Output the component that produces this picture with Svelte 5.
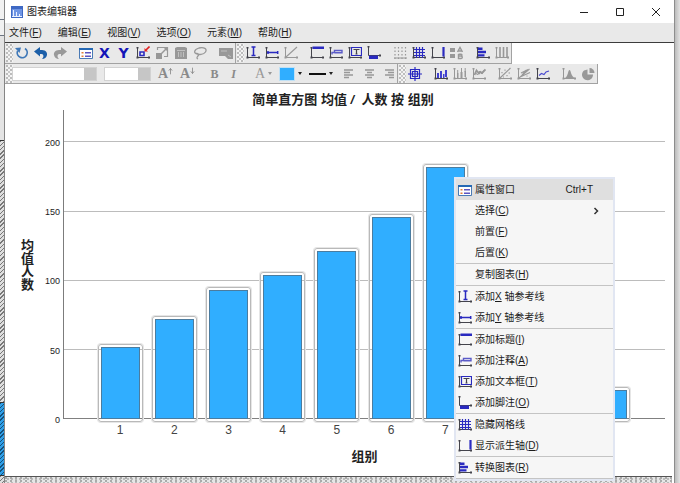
<script>
  const DARK = '#44444c';
  const BLUE = '#2a2ac0';
  const GRAY = '#989898';

  // Shapes on a 14x14 grid: [path, paint, 'f' for fill or stroke width]
  const axes = (c) => [
    ['M1.5 1V11.5H13', c, 1],
    ['M.5 1h2v1.500h-2zM.5 10.500h2v2h-2zM12 10.500h2v2h-2z', c, 'f']
  ];

  const icons = {
    rotate: [
      ['M10 2.500A5 5 0 1 1 2.500 5', '#3f78b8', 1.7],
      ['M0 2L6 1.500L4.500 7z', '#3f78b8', 'f']
    ],
    undo: [['M0 5.500L6 1V4H8C12 4 13.500 7 13 9C12.500 11.500 10.500 13 8 13C10 11.500 10 8 7.500 8H6V10.500z', '#1c5fa8', 'f']],
    redo: [['M14 5.500L8 1V4H6C2 4 .5 7 1 9C1.500 11.500 3.500 13 6 13C4 11.500 4 8 6.500 8H8V10.500z', '#999', 'f']],
    props: [
      ['M1 2h12v11H1z', '#fff', 'f'],
      ['M.5 2.500h13v10H.5z', '#4a7ab5', 1],
      ['M0 2h14v2H0z', '#2468b4', 'f'],
      ['M2.500 6h2v1.500h-2zM2.500 9.500h2V11h-2z', '#e0803a', 'f'],
      ['M6 6.800H12M6 10.200H12', '#5c55c0', 1.4]
    ],
    scale: [
      ...axes(DARK),
      ['M4 6h4v3.500H4z', BLUE, 1.6],
      ['M13.500 .5L10 4', '#e02020', 1.6],
      ['M8.500 2V5.500H12z', '#e02020', 'f']
    ],
    rescale: [
      ['M2.500 4V1.500h10v9H9', GRAY, 1.2],
      ['M1 7h6v6H1zM13 1V6L8 1z', GRAY, 'f'],
      ['M5 9L11 3', GRAY, 1.4]
    ],
    bins: [
      ['M1 2L3 1h8l2 1v11H1z', GRAY, 'f'],
      ['M4.500 11V6M7 11V6M9.500 11V6M3 4.500h8', '#c0c0c0', 1]
    ],
    lasso: [['M4.500 8C0 7.500 1 3.500 6 2C11 .8 14.500 3 12.500 6C10.500 9 5.500 9 4 7.500C6.500 8 5.500 9.500 4.500 10.500C3.500 12 4 12.500 5 13', GRAY, 1.3]],
    picture: [
      ['M0 2h14v11H9L6 10H0z', GRAY, 'f'],
      ['M2 5h6M9 9l3 2', '#c0c0c0', 1]
    ],
    xref: [...axes(DARK), ['M7.500 1V9.500M5.500 1h4M5.500 9.500h4', BLUE, 1.5]],
    yref: [...axes(DARK), ['M2 6.500H13M3 5v3M12.700 5v3', BLUE, 1.5]],
    eqref: [...axes(GRAY), ['M2 11L13 1', GRAY, 1.1]],
    title: [...axes(DARK), ['M2.500 .5H14v2.500H2.500z', BLUE, 'f']],
    note: [...axes(DARK), ['M3 8.500V6.500H5.500V4.500H13V6.800H5.500', '#5b5bc8', 1.4]],
    textbox: [...axes(DARK), ['M3.500 1.500h10v8h-10z', BLUE, 1.2], ['M5.500 3.500h6M8.500 3.500V8M7.500 8h2', DARK, 1.2]],
    footnote: [['M1.500 0V9.500H13', DARK, 1], ['M.5 0h2v1.500h-2zM12 8.500h2v2h-2z', DARK, 'f'], ['M2 9.500h9V13H2z', BLUE, 'f']],
    dots: [['M2 1V13M5.500 1V13M9 1V13M12.500 1V13', GRAY, 1.2, '1.500 2'], ['M1 12H14', GRAY, 1]],
    grid: [...axes(DARK), ['M4.500 1V12M7.500 1V12M10.500 1V12M2 3.500H13M2 6.500H13M2 9.500H13', BLUE, 1.2]],
    derived: [...axes(DARK), ['M12.500 1V10.500', BLUE, 2.200]],
    labels: [
      ['M0 2h5v4H0zM0 8h5v4H0z', GRAY, 'f'],
      ['M7.500 6L10 1.500L12.500 6M8.500 5H12', GRAY, 1.4],
      ['M8.500 8V12.500H11C13 12 12.500 10 11 10H8.500M8.500 8.200H11C12.500 8.500 12 10 11 10', GRAY, 1.4]
    ],
    transpose: [...axes(DARK), ['M2 1.500h4.500v2.500H2zM2 4.800h8v2.500H2zM2 8.200h6.500v2.300H2z', BLUE, 'f']],
    columns: [...axes(GRAY), ['M5 1V11M8.500 1V11M12 1V11', GRAY, 1.6]],
    left: [['M1 3H10M1 5.500H7M1 8H10M1 10.500H6', GRAY, 1.4]],
    center: [['M3 3H12M5 5.500H10M3 8H12M5 10.500H10', GRAY, 1.4]],
    right: [['M4 3H13M7 5.500H13M4 8H13M8 10.500H13', GRAY, 1.4]],
    frame: [['M2.500 2.500h9v9h-9zM4.500 4.500h5v5h-5zM7 0V14M0 7H14', BLUE, 1.2]],
    hist: [...axes(DARK), ['M3 6h2v5H3zM6 4h2v7H6zM9 7h1.500v4H9zM11 3h2v7h-2z', '#4040d0', 'f']],
    errbars: [...axes(GRAY), ['M4 6h1.500v5H4zM7.500 5h2v6h-2zM11.500 4H13v6h-1.500z', GRAY, 'f'], ['M4.700 3V6M8.500 1V5M12.200 1V5', GRAY, 1]],
    area: [...axes(GRAY), ['M2.500 8L4.500 3.500L7 6.500L8.500 5L10 6L13.500 2.500', GRAY, 1.8], ['M3 5L5.500 8L7.500 4L10 7L12 3', GRAY, 1]],
    fit: [...axes(GRAY), ['M2 11L12.500 1M4 5v1.200M9 8v1.200M7 2.500v1.200M10.500 6h1.500M5 10h1', GRAY, 1.1]],
    fitgroups: [...axes(GRAY), ['M2 11L12.500 2M2 10.500L13 5.500M4 6L11 2.500M5 8L9 3M10 8.500v1', GRAY, 1.1]],
    interp: [...axes(DARK), ['M3 8.500L5.500 6.500L8 7.500L10 5L13 4', '#4a4ad0', 1.2]],
    normal: [...axes(GRAY), ['M3 11C6 10 6 3 7.500 3S9 10 13 11z', GRAY, 'f']],
    pie: [['M6.500 2.500V7.500H12A5.500 5.500 0 1 1 3 3.500z', GRAY, 'f'], ['M8.500 1A5 5 0 0 1 13.500 6H8.500z', GRAY, 'f']]
  };

  const mainTools = [
    [['rotate', '旋转'], ['undo', '撤销'], ['redo', '重做']],
    [['props', '属性'], ['X', 'X'], ['Y', 'Y'], ['scale', '缩放'], ['rescale', '重新缩放'], ['bins', '分箱'], ['lasso', '套索']],
    [['picture', '图片']]
  ];
  const elementTools = [
    [['xref', 'X 轴参考线'], ['yref', 'Y 轴参考线'], ['eqref', '方程参考线']],
    [['title', '标题'], ['note', '注释'], ['textbox', '文本框'], ['footnote', '脚注']],
    [['dots', '刻度'], ['grid', '网格线'], ['derived', '派生轴'], ['labels', '图例']],
    [['transpose', '转换图表'], ['columns', '分面']]
  ];
  const seriesTools = [
    [['frame', '数据标签']],
    [['hist', '直方图'], ['errbars', '误差条形图'], ['area', '面积图']],
    [['fit', '拟合线'], ['fitgroups', '分组拟合线'], ['interp', '插值线']],
    [['normal', '正态曲线'], ['pie', '饼图']]
  ];
  const alignTools = [[['left', '左对齐'], ['center', '居中'], ['right', '右对齐']]];

  const menus = [['文件', 'F'], ['编辑', 'E'], ['视图', 'V'], ['选项', 'O'], ['元素', 'M'], ['帮助', 'H']];

  const contextMenu = [
    [
      { icon: 'props', text: '属性窗口', shortcut: 'Ctrl+T', active: true },
      { text: '选择', key: 'C', sub: true },
      { text: '前置', key: 'F' },
      { text: '后置', key: 'K' }
    ],
    [{ text: '复制图表', key: 'H' }],
    [
      { icon: 'xref', text: '添加', inline: 'X', rest: ' 轴参考线' },
      { icon: 'yref', text: '添加', inline: 'Y', rest: ' 轴参考线' }
    ],
    [
      { icon: 'title', text: '添加标题', key: 'I' },
      { icon: 'note', text: '添加注释', key: 'A' },
      { icon: 'textbox', text: '添加文本框', key: 'T' },
      { icon: 'footnote', text: '添加脚注', key: 'O' }
    ],
    [
      { icon: 'grid', text: '隐藏网格线' },
      { icon: 'derived', text: '显示派生轴', key: 'D' }
    ],
    [{ icon: 'transpose', text: '转换图表', key: 'R' }]
  ];

  const top = 223;
  const ticks = [200, 150, 100, 50, 0];
  const spans = ticks.map((t, i) => (i ? ticks[i - 1] : top) - t);
  const bars = [52, 72, 93, 104, 121, 146, 182, null, null, 21];
</script>

{#snippet icon(name)}
  <svg class="icon" viewBox="0 0 14 14" aria-hidden="true">
    {#each icons[name] as [d, paint, mode, dash]}
      {#if mode === 'f'}
        <path {d} fill={paint} />
      {:else}
        <path {d} fill="none" stroke={paint} stroke-width={mode} stroke-dasharray={dash} />
      {/if}
    {/each}
  </svg>
{/snippet}

{#snippet tools(groups)}
  {#each groups as group}
    <div class="group">
      {#each group as [name, label]}
        <button class="tool" aria-label={label}>
          {#if name === 'X' || name === 'Y'}<b class="axis">{name}</b>{:else}{@render icon(name)}{/if}
        </button>
      {/each}
    </div>
  {/each}
{/snippet}

<div class="screen">
  <div class="behind-left"><i class="pane"></i><i class="hatch"></i><i class="hatch selected"></i><i class="hatch rest"></i></div>

  <main class="window">
    <header class="titlebar">
      <svg class="logo" viewBox="0 0 12 12" aria-hidden="true">
        <path d="M0 0h12v12H0z" fill="#3f69c4" />
        <path d="M1 3h10v8H1z" fill="#6f95e4" />
        <path d="M2.500 4V10.500M5.500 6V10.500M8.500 8V10.500M1 10.500H11" stroke="#e9f0ff" fill="none" />
      </svg>
      <h1>图表编辑器</h1>
      <div class="controls">
        <button aria-label="最小化"><svg viewBox="0 0 10 10"><path d="M1 5.500H9" /></svg></button>
        <button aria-label="最大化"><svg viewBox="0 0 10 10"><path d="M1.500 1.500h7v7h-7z" /></svg></button>
        <button aria-label="关闭"><svg viewBox="0 0 10 10"><path d="M1 1L9 9M9 1L1 9" /></svg></button>
      </div>
    </header>

    <nav class="menubar">
      {#each menus as [text, key]}
        <button>{text}(<u>{key}</u>)</button>
      {/each}
    </nav>

    <div class="bars-row">
      <div class="toolbar"><i class="grip"></i>{@render tools(mainTools)}</div>
      <div class="toolbar"><i class="grip"></i>{@render tools(elementTools)}</div>
    </div>
    <div class="bars-row">
      <div class="toolbar format">
        <i class="grip"></i>
        <select class="family" aria-label="字体"><option></option></select>
        <select class="size" aria-label="字号"><option></option></select>
        <button class="letter" aria-label="增大字号">A<svg viewBox="0 0 6 8"><path d="M3 8V1M1 3.500L3 1L5 3.500" /></svg></button>
        <button class="letter" aria-label="减小字号">A<svg viewBox="0 0 6 8"><path d="M3 0V7M1 4.500L3 7L5 4.500" /></svg></button>
        <div class="group styles">
          <button class="tool"><b>B</b></button>
          <button class="tool"><em>I</em></button>
        </div>
        <button class="drop muted" aria-label="文字颜色"><span>A</span><i></i></button>
        <button class="drop" aria-label="填充颜色"><span class="swatch"></span><i></i></button>
        <button class="drop" aria-label="边框样式"><span class="line"></span><i></i></button>
        {@render tools(alignTools)}
      </div>
      <div class="toolbar series"><i class="grip"></i>{@render tools(seriesTools)}</div>
    </div>

    <section class="chart">
      <h2>简单直方图 均值 <em>/</em>&nbsp; 人数 按 组别</h2>
      <div class="body">
        <div class="ylabel">均值人数</div>
        <div class="yticks">
          {#each ticks as tick, i}
            <div style:flex-grow={spans[i]}><span>{tick}</span></div>
          {/each}
        </div>
        <div class="plot">
          <div class="lines">
            {#each spans as span}<div style:flex-grow={span}></div>{/each}
          </div>
          <div class="series-bars">
            {#each bars as value}
              <div class="slot">
                {#if value}<div class="bar" style:height="{(value / top) * 100}%"></div>{/if}
              </div>
            {/each}
          </div>
        </div>
      </div>
      <div class="xticks">
        {#each bars as _, i}<span>{i < 7 ? i + 1 : ''}</span>{/each}
      </div>
      <div class="xlabel">组别</div>
    </section>
    <footer class="texture"></footer>
  </main>

  <div class="behind-right"></div>

  <div class="context" role="menu">
    {#each contextMenu as section}
      <div class="section">
        {#each section as item}
          <button class="item" class:active={item.active} role="menuitem">
            <span class="glyph">{#if item.icon}{@render icon(item.icon)}{/if}</span>
            <span class="text">{item.text}{#if item.key}(<u>{item.key}</u>){/if}{#if item.inline}<u>{item.inline}</u>{item.rest}{/if}</span>
            {#if item.shortcut}<kbd>{item.shortcut}</kbd>{/if}
            {#if item.sub}<svg class="more" viewBox="0 0 6 8"><path d="M1.500 1L4.500 4L1.500 7" /></svg>{/if}
          </button>
        {/each}
      </div>
    {/each}
  </div>
</div>

<style>
  .screen {
    position: relative;
    display: flex;
    height: 100vh;
    overflow: hidden;
    background: #fff;
    color: #1c1c1c;
    font: 10px/12px "Liberation Sans", "Noto Sans CJK SC", sans-serif;
  }
  button {
    display: flex;
    align-items: center;
    margin: 0;
    padding: 0;
    border: 0;
    background: none;
    color: inherit;
    font: inherit;
    white-space: pre;
  }
  u { text-underline-offset: 1px; }

  .behind-left {
    display: flex;
    flex-direction: column;
    flex: none;
    box-sizing: border-box;
    width: 5px;
    border-right: 1px solid #858585;
  }
  .pane {
    flex: 141;
    background: linear-gradient(#f1f1f1 19px, #6c7482 19px 20px, #f1f1f1 20px 35px, #6c7482 35px 36px, #e4e4e4 36px);
  }
  .hatch {
    flex: 262;
    border-top: 1px solid #333;
    background: repeating-linear-gradient(135deg, #777 0 1px, #dedede 1px 3px);
  }
  .hatch.selected {
    flex: 73;
    background: repeating-linear-gradient(135deg, #12507c 0 1px, #2f9fe8 1px 3px);
  }
  .hatch.rest { flex: 7; }
  .behind-right {
    flex: none;
    box-sizing: border-box;
    width: 6px;
    border-left: 1px solid #8d8d8d;
    background: linear-gradient(90deg, #bcbcbc, #e2e2e2);
  }

  .window {
    display: flex;
    flex: 1;
    flex-direction: column;
    min-width: 0;
  }
  .titlebar {
    display: flex;
    align-items: center;
    flex: none;
    height: 23px;
    padding-left: 6px;
    gap: 4px;
  }
  .logo { width: 12px; height: 12px; }
  h1 { margin: 0; font-size: 10px; font-weight: 400; }
  .controls { display: flex; margin-left: auto; }
  .controls button { width: 36px; height: 20px; justify-content: center; }
  .controls svg { width: 10px; height: 10px; fill: none; stroke: #222; }

  .menubar {
    display: flex;
    flex: none;
    gap: 16px;
    height: 19px;
    padding-left: 4px;
    border-bottom: 1px solid #3c3c3c;
    background: #e9e9e9;
  }

  .bars-row { display: flex; flex: none; }
  .toolbar {
    display: flex;
    align-items: center;
    box-sizing: border-box;
    height: 21px;
    padding-bottom: 1px;
    border-right: 1px solid #a2a2a2;
    border-bottom: 1px solid #a2a2a2;
    background: #e9e9e9;
    gap: 7px;
  }
  .bars-row + .bars-row .toolbar { height: 20px; padding: 0; }
  .grip {
    align-self: stretch;
    width: 7px;
    margin: 1px -8px 0 1px;
    background:
      radial-gradient(circle at 1px 1px, #bcbcbc 1px, transparent 1px) 0 0 / 4px 4px,
      radial-gradient(circle at 1px 1px, #c8c8c8 1px, transparent 1px) 2px 2px / 4px 4px,
      #f4f4f4;
  }
  .group { display: flex; }
  .tool { justify-content: center; width: 19px; height: 18px; }
  .icon { display: block; width: 14px; height: 14px; }
  .axis { color: #1414b8; font: 900 14px/14px "DejaVu Sans", sans-serif; }

  .format { gap: 7px; color: #8a8a8a; }
  select {
    appearance: none;
    height: 14px;
    padding: 0;
    border: 1px solid #d2d2d2;
    border-radius: 0;
    background: linear-gradient(#c6c6c6, #c6c6c6) right / 12px 100% no-repeat #fff;
  }
  .family { width: 85px; }
  .size { width: 47px; }
  .letter { width: 15px; font: 700 14px/14px "Liberation Serif", serif; }
  .letter svg { flex: none; width: 5px; height: 8px; margin-bottom: 5px; }
  .letter svg path { fill: none; stroke: #888; }
  .styles { margin-left: 3px; font: 12px/12px "Liberation Serif", serif; }
  .styles em { font-weight: 700; }
  .drop { gap: 3px; color: #333; }
  .drop i {
    width: 0;
    border: 2px solid transparent;
    border-top: 3px solid #222;
    border-bottom: 0;
  }
  .drop.muted { margin-left: 5px; color: #999; font: 14px/14px "Liberation Serif", serif; }
  .drop.muted i { border-top-color: #999; }
  .swatch { width: 14px; height: 12px; border: 1px solid #bfe0f5; background: #30aeff; }
  .line { width: 17px; height: 2px; background: #111; }

  .chart {
    display: flex;
    flex: 1;
    flex-direction: column;
    min-height: 0;
    padding: 6px 9px 3px 16px;
  }
  h2, .xlabel, .ylabel {
    margin: 0;
    color: #222;
    font-size: 13px;
    font-weight: 700;
    text-align: center;
  }
  h2 { line-height: 20px; }
  .body { display: flex; flex: 1; min-height: 0; }
  .ylabel { align-self: center; width: 13px; line-height: 13px; }
  .yticks {
    display: flex;
    flex-direction: column;
    width: 26px;
    margin-right: 3px;
    font-size: 9px;
  }
  .yticks div {
    display: flex;
    align-items: flex-end;
    justify-content: flex-end;
    flex-basis: 0;
    min-height: 0;
  }
  .yticks span { margin-bottom: -7px; }
  .plot {
    position: relative;
    flex: 1;
    border-left: 1px solid #7c7c7c;
  }
  .lines {
    position: absolute;
    inset: 0;
    display: flex;
    flex-direction: column;
  }
  .lines div { flex-basis: 0; box-sizing: border-box; border-bottom: 1px solid #bcbcbc; }
  .lines div:last-child { border-color: #808080; }
  .series-bars {
    position: relative;
    display: flex;
    box-sizing: border-box;
    height: 100%;
    padding: 0 30px 0 29px;
  }
  .slot { display: flex; flex: 1; align-items: flex-end; justify-content: center; }
  .bar {
    position: relative;
    box-sizing: border-box;
    width: 72%;
    border: 1px solid #4b7c9f;
    background: #30aeff;
  }
  .bar::after {
    content: "";
    position: absolute;
    inset: -4px;
    border: 1px solid #b9b9b9;
    border-radius: 3px;
    box-shadow: 0 0 0 1px #e6e6e6;
  }
  .xticks {
    display: flex;
    margin-left: 43px;
    padding: 0 30px 0 29px;
    font-size: 12px;
    line-height: 22px;
    color: #444;
    min-height: 22px;
  }
  .xticks span { flex: 1; text-align: center; }
  .xlabel { margin-left: 43px; line-height: 32px; }
  .texture {
    flex: none;
    box-sizing: border-box;
    height: 7px;
    margin-right: 2px;
    border-top: 1px solid #555;
    background:
      radial-gradient(circle at 1px 1px, #aaa 1px, transparent 1px) 0 0 / 5px 3px,
      radial-gradient(circle at 1px 1px, #bbb 1px, transparent 1px) 2px 1px / 4px 4px,
      #e6e6e6;
  }

  .context {
    position: absolute;
    top: 177px;
    left: 454px;
    box-sizing: border-box;
    width: 161px;
    border: 2px solid #e1e6f2;
    background: #f6f6f6;
  }
  .section { border-bottom: 1px solid #c4c4c4; }
  .item { width: 100%; height: 21px; padding: 0 14px 0 2px; gap: 3px; }
  .item.active { background: #dfdfdf; }
  .item .text { flex: 1; text-align: left; }
  .glyph { width: 14px; }
  kbd { margin-right: 6px; font: inherit; }
  .more { width: 6px; height: 8px; }
  .more path { fill: none; stroke: #333; stroke-width: 1.500; }
</style>
